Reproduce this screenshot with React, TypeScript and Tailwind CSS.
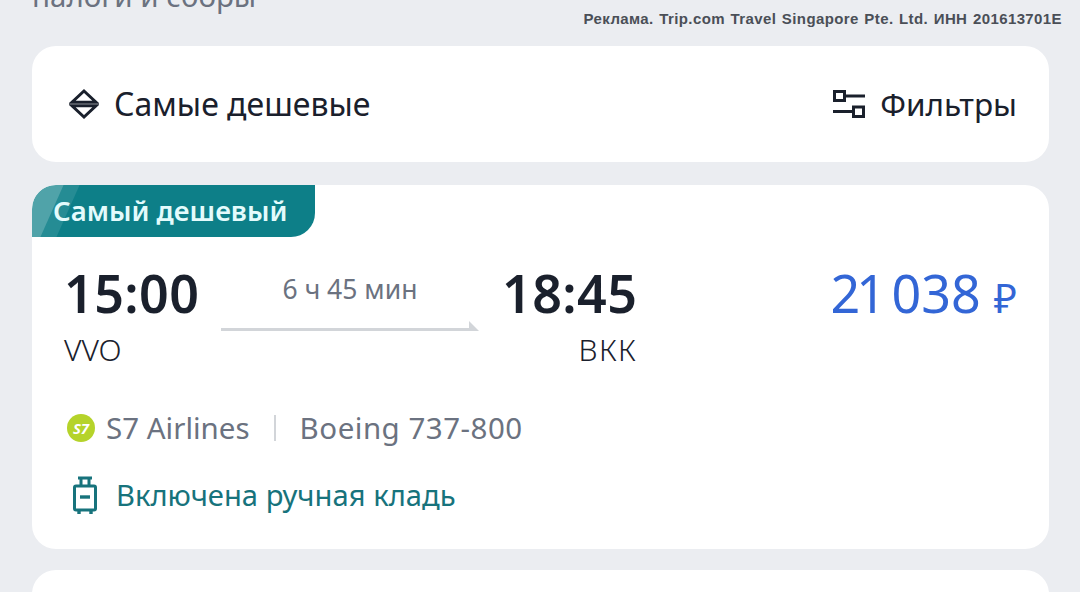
import React from 'react';

const SortIcon = () => (
  <svg width="30" height="32" viewBox="0 0 30 32" fill="none" className="shrink-0">
    <path d="M15 3 L27 14.2 H3 Z" fill="#fff" stroke="#1a202c" strokeWidth="3" strokeLinejoin="miter" />
    <path d="M3 17.8 H27 L15 29 Z" fill="#fff" stroke="#1a202c" strokeWidth="3" strokeLinejoin="miter" />
  </svg>
);

const FilterIcon = () => (
  <svg width="32" height="28" viewBox="0 0 32 28" fill="none" className="shrink-0">
    <rect x="1.5" y="1.5" width="10" height="9" stroke="#1a202c" strokeWidth="3" />
    <path d="M12 6 H32" stroke="#1a202c" strokeWidth="3" />
    <rect x="20.5" y="17" width="10" height="9.5" stroke="#1a202c" strokeWidth="3" />
    <path d="M0 21.5 H20" stroke="#1a202c" strokeWidth="3" />
  </svg>
);

const BagIcon = () => (
  <svg width="24" height="38" viewBox="0 0 24 38" fill="none" className="shrink-0">
    <path d="M5 2 H19 M8 2 V10 M16 2 V10" stroke="#17737c" strokeWidth="3" />
    <rect x="1.5" y="10" width="21" height="24" rx="1.5" stroke="#17737c" strokeWidth="3" />
    <path d="M7 21 H17" stroke="#17737c" strokeWidth="3.4" />
    <path d="M6 34 V38 M18 34 V38" stroke="#17737c" strokeWidth="3.4" />
  </svg>
);

const S7Logo = () => (
  <span className="w-[28px] h-[28px] shrink-0 rounded-full bg-[#b5d32a] flex items-center justify-center text-white text-[15px] font-bold italic leading-none">
    S7
  </span>
);

export default function App() {
  return (
    <div className="w-[1080px] h-[592px] overflow-hidden bg-[#ebedf1] pl-8 pr-[31px] font-['Noto_Sans',sans-serif] text-[#1a202c]">
      <div className="h-[46px] flex justify-between items-start">
        <div className="-mt-[22px] text-[29.5px] leading-[36px] text-[#6b7280]">налоги и сборы</div>
        <div className="mt-[10px] -mr-[13px] font-['Liberation_Sans',sans-serif] text-[15px] leading-[17px] font-bold text-[#4a4f57] tracking-[0.4px] [word-spacing:1px]">
          Реклама. Trip.com Travel Singapore Pte. Ltd. ИНН 201613701E
        </div>
      </div>

      <div className="h-[116px] bg-white rounded-[24px] flex items-center justify-between pl-[37px] pr-8">
        <div className="flex items-center gap-[15px]">
          <SortIcon />
          <span className="text-[32px] leading-[40px]">Самые дешевые</span>
        </div>
        <div className="flex items-center gap-[15px]">
          <FilterIcon />
          <span className="text-[31.5px] leading-[40px]">Фильтры</span>
        </div>
      </div>

      <div className="mt-[23px] h-[364px] bg-white rounded-[24px] overflow-hidden">
        <div className="relative w-[283px] h-[52px] bg-[#0d7f88] rounded-tl-[24px] rounded-br-[24px] overflow-hidden flex items-center pl-[21px]">
          <div className="absolute left-[-14px] top-0 h-full w-[50px] bg-white/10 -skew-x-[24deg]" />
          <div className="absolute left-[-14px] top-0 h-full w-[34px] bg-white/20 -skew-x-[24deg]" />
          <span className="relative text-[27.5px] leading-[36px] font-semibold text-[#e3fbfc]">Самый дешевый</span>
        </div>

        <div className="pl-8 pr-8 pt-[25px] flex justify-between items-start">
          <div className="flex items-start">
            <div className="w-[157px]">
              <div className="text-[52px] leading-[62px] font-semibold tracking-[0.4px]">15:00</div>
              <div className="mt-[6px] text-[30px] leading-[40px] font-light">VVO</div>
            </div>
            <div className="w-[258px] mr-[23px] pt-[9px]">
              <div className="text-center text-[26.5px] leading-[36px] text-[#6b7280]">6 ч 45 мин</div>
              <div className="mt-[14px] flex items-end">
                <div className="flex-1 h-[3px] bg-[#d2d5d9]" />
                <div className="w-0 h-0 border-l-[10px] border-l-[#d2d5d9] border-t-[10px] border-t-transparent" />
              </div>
            </div>
            <div className="text-right">
              <div className="text-[52px] leading-[62px] font-semibold tracking-[0.4px]">18:45</div>
              <div className="mt-[6px] text-[30px] leading-[40px] font-light tracking-[1.5px]">ВКК</div>
            </div>
          </div>
          <div className="text-[52px] leading-[62px] text-[#3366d6] flex items-baseline gap-[13px]">
            <span>
              <span className="tracking-[-4px]">21 </span>038
            </span>
            <span className="text-[40px]">₽</span>
          </div>
        </div>

        <div className="mt-[38px] pl-[35px] flex items-center">
          <S7Logo />
          <span className="ml-[11px] text-[29.5px] leading-[40px] text-[#6b7280]">S7 Airlines</span>
          <div className="ml-[24px] mr-[24px] w-[2px] h-[26px] bg-[#d2d5d9]" />
          <span className="text-[29.5px] leading-[40px] text-[#6b7280] tracking-[0.5px]">Boeing 737-800</span>
        </div>

        <div className="mt-[28px] pl-[41px] flex items-center gap-[19px]">
          <BagIcon />
          <span className="text-[29.2px] leading-[38px] text-[#17737c]">Включена ручная кладь</span>
        </div>
      </div>

      <div className="mt-[21px] h-[100px] bg-white rounded-[24px]" />
    </div>
  );
}
